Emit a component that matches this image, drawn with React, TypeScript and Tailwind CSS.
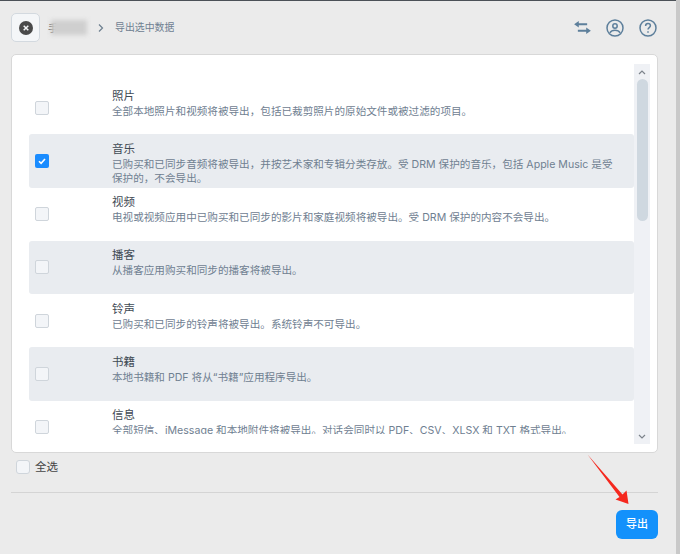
const rows = [
  { title: "照片", desc: ["全部本地照片和视频将被导出，包括已裁剪照片的原始文件或被过滤的项目。"] },
  {
    title: "音乐",
    desc: ["已购买和已同步音频将被导出，并按艺术家和专辑分类存放。受 DRM 保护的音乐，包括 Apple Music 是受", "保护的，不会导出。"],
    checked: true,
  },
  { title: "视频", desc: ["电视或视频应用中已购买和已同步的影片和家庭视频将被导出。受 DRM 保护的内容不会导出。"] },
  { title: "播客", desc: ["从播客应用购买和同步的播客将被导出。"] },
  { title: "铃声", desc: ["已购买和已同步的铃声将被导出。系统铃声不可导出。"] },
  { title: "书籍", desc: ["本地书籍和 PDF 将从“书籍”应用程序导出。"] },
  { title: "信息", desc: ["全部短信、iMessage 和本地附件将被导出。对话会同时以 PDF、CSV、XLSX 和 TXT 格式导出。"] },
];

function Check({ checked }: { checked?: boolean }) {
  if (checked) {
    return (
      <span className="flex h-[14px] w-[14px] shrink-0 items-center justify-center rounded-[2px] bg-[#1a8cff]">
        <svg viewBox="0 0 14 14" className="h-[14px] w-[14px]" fill="none" stroke="#fff" strokeWidth="1.6">
          <path d="M4 7.2l2.1 2.1L10 5" />
        </svg>
      </span>
    );
  }
  return <span className="h-[14px] w-[14px] shrink-0 rounded-[2px] border border-[#cfd5db] bg-[#f3f5f8]" />;
}

export default function App() {
  return (
    <div className="relative flex h-[554px] w-[680px] overflow-hidden bg-[#ebebeb] font-['Inter','Noto_Sans_CJK_SC',sans-serif]">
      <div className="flex w-[676px] flex-col border-t border-[#4b5157] pl-[11px] pr-[18px]">
        <div className="flex h-[53px] shrink-0 items-center">
          <button className="flex h-[29px] w-[29px] items-center justify-center rounded-[5px] border border-[#d3d9df] bg-[#f4f6f8]">
            <svg viewBox="0 0 14 14" className="h-[14px] w-[14px]">
              <circle cx="7" cy="7" r="7" fill="#4a4a4a" />
              <path d="M4.7 4.7l4.6 4.6M9.3 4.7l-4.6 4.6" stroke="#f4f6f8" strokeWidth="1.5" />
            </svg>
          </button>
          <span className="ml-[8px] text-[10px] leading-[14px] text-[#555]">手</span>
          <span className="-ml-[7px] h-[15px] w-[36px] bg-[#cfcfcf] blur-[2px]" />
          <svg viewBox="0 0 8 10" className="ml-[10px] h-[10px] w-[8px]" fill="none" stroke="#6d7f8f" strokeWidth="1.2">
            <path d="M2 1.5L5.5 5 2 8.5" />
          </svg>
          <span className="ml-[10px] text-[9.9px] text-[#6f8091]">导出选中数据</span>
          <div className="ml-auto flex items-center gap-[15px] pr-[1px]">
            <svg viewBox="0 0 18 14" className="h-[13px] w-[17px]" fill="#5d7f9b">
              <path d="M0 3.5L5 0v2.4h9v2.2H5V7zM18 10.5L13 7v2.4H4v2.2h9V14z" />
            </svg>
            <svg viewBox="0 0 18 18" className="h-[18px] w-[18px]" fill="none" stroke="#5d7f9b" strokeWidth="1.5">
              <circle cx="9" cy="9" r="8" />
              <circle cx="9" cy="7" r="2.2" />
              <path d="M3.8 13.8C5 11.8 6.8 11.2 9 11.2s4 .6 5.2 2.6" />
            </svg>
            <svg viewBox="0 0 18 18" className="h-[18px] w-[18px]" fill="none" stroke="#5d7f9b" strokeWidth="1.5">
              <circle cx="9" cy="9" r="8" />
              <path d="M6.6 7c0-1.5 1-2.4 2.4-2.4s2.4.9 2.4 2.2c0 1.9-2.4 1.9-2.4 3.8" />
              <path d="M9 12.2v1.5" />
            </svg>
          </div>
        </div>

        <div className="flex h-[399px] shrink-0 rounded-[5px] border border-[#d8d8d8] bg-white pl-[17px] pr-[7px] pt-[9px]">
          <div className="flex-1 pb-[18px]">
            <div className="h-full overflow-hidden pt-[17px]">
              {rows.map((row, i) => (
                <div
                  key={row.title}
                  className={`flex h-[53.3px] overflow-hidden rounded-[3px] pl-[6px] ${i % 2 === 1 ? "bg-[#e9ecf0]" : ""}`}
                >
                  <div className="flex h-[53px] w-[77px] shrink-0 items-center">
                    <Check checked={row.checked} />
                  </div>
                  <div className="pt-[6.5px]">
                    <div className="text-[11.5px] leading-[17px] text-[#3f4a54]">{row.title}</div>
                    {row.desc.map((line) => (
                      <div key={line} className="whitespace-nowrap text-[10.6px] leading-[14px] text-[#6f8091]">
                        {line}
                      </div>
                    ))}
                  </div>
                </div>
              ))}
            </div>
          </div>
          <div className="mb-[8px] flex w-[16px] shrink-0 flex-col items-center bg-[#eff1f5]">
            <svg viewBox="0 0 8 5" className="mt-[6px] h-[5px] w-[8px]" fill="none" stroke="#7c838b" strokeWidth="1.2">
              <path d="M1 4l3-3 3 3" />
            </svg>
            <div className="mt-[4px] h-[142px] w-[11px] rounded-full bg-[#cfd8e0]" />
            <svg viewBox="0 0 8 5" className="mb-[5px] mt-auto h-[5px] w-[8px]" fill="none" stroke="#7c838b" strokeWidth="1.2">
              <path d="M1 1l3 3 3-3" />
            </svg>
          </div>
        </div>

        <div className="flex h-[40px] shrink-0 items-start border-b border-[#d4d4d4] pl-[5px] pt-[7px]">
          <span className="h-[14px] w-[14px] rounded-[3px] border border-[#cfd5db] bg-[#f3f5f8]" />
          <span className="ml-[5px] text-[11.5px] leading-[14px] text-[#444]">全选</span>
        </div>

        <div className="flex justify-end pt-[17px]">
          <button className="h-[29px] w-[42px] rounded-[6px] bg-[#1391fb] text-[11px] font-medium text-white">导出</button>
        </div>
      </div>
      <div className="w-[4px] bg-[#c9c9c9]" />

      <svg viewBox="0 0 680 554" className="pointer-events-none absolute left-0 top-0 h-[554px] w-[680px]">
        <path d="M587.5 454.5L622.5 494.5L626.5 490.5L628.5 504L615.5 499.5L619.5 497Z" fill="#f5281e" />
      </svg>
    </div>
  );
}
